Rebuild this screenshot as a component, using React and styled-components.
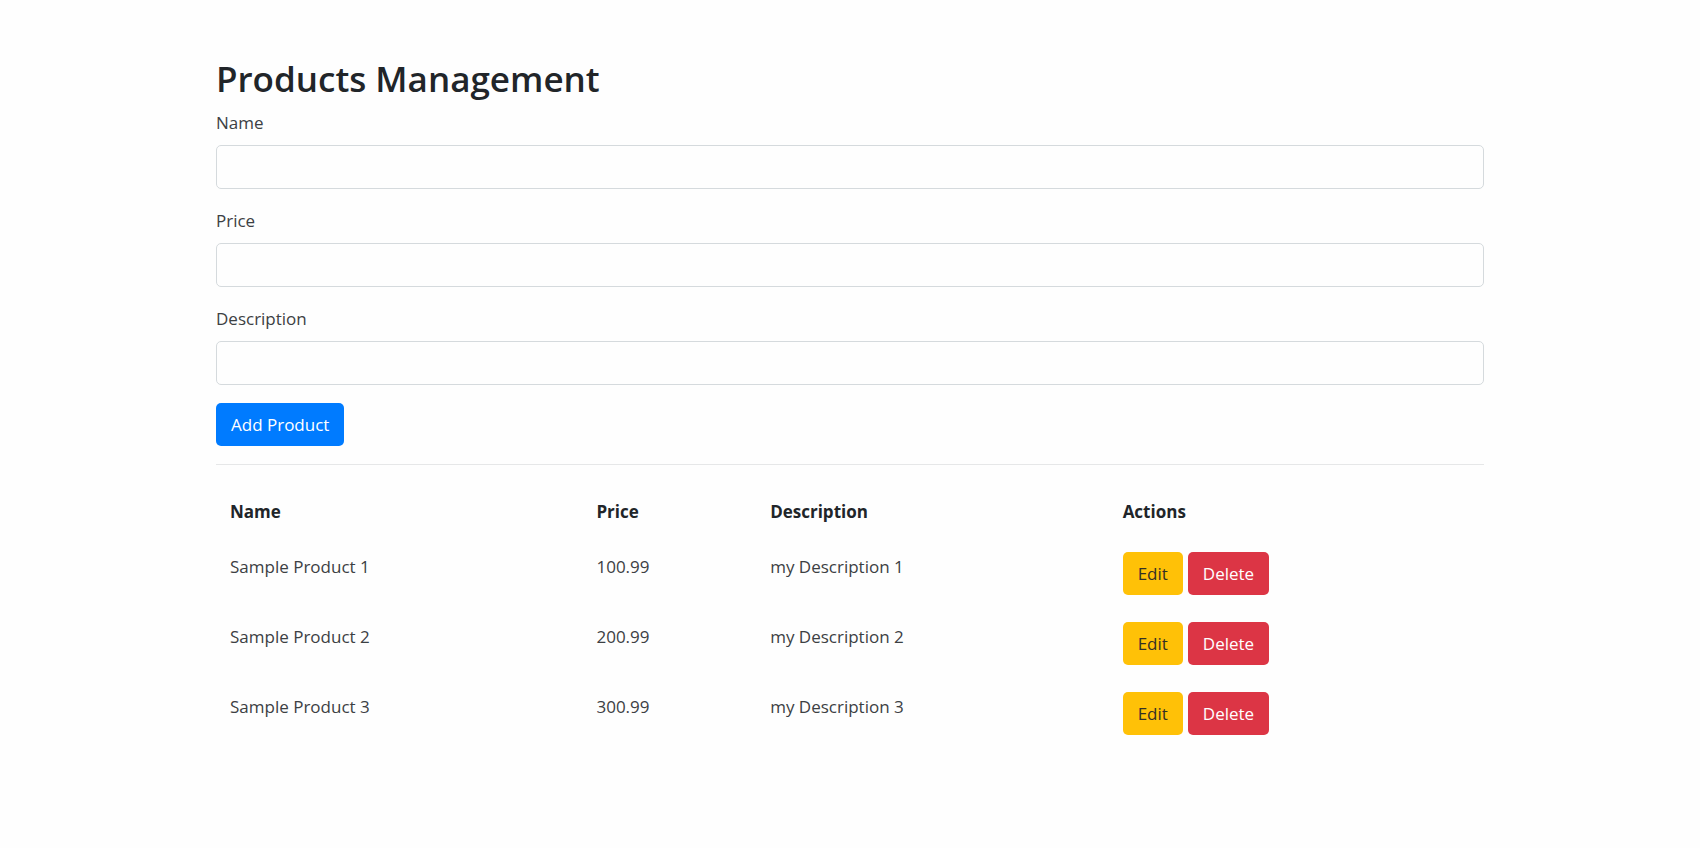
import React, { useState } from "react";
import styled, { createGlobalStyle } from "styled-components";

const GlobalStyle = createGlobalStyle`
  *, *::before, *::after { box-sizing: border-box; }
  body {
    margin: 0;
    background: #fefefe;
    color: #212529;
    font-family: "Segoe UI", "Open Sans", "Noto Sans", sans-serif;
    font-size: 17px;
    line-height: 27px;
  }
`;

const Container = styled.main`
  width: 100%;
  max-width: 1302px;
  margin: 0 auto;
  padding: 56px 17px;
`;

const Title = styled.h2`
  margin: 0 0 8px;
  font-size: 35px;
  font-weight: 600;
  line-height: 45px;
`;

const FormGroup = styled.div`
  margin-bottom: 18px;
`;

const Label = styled.label`
  display: block;
  margin-bottom: 9px;
  color: #3c4043;
`;

const Input = styled.input`
  display: block;
  width: 100%;
  height: 44px;
  padding: 7px 14px;
  border: 1px solid #d5dadd;
  border-radius: 5px;
  background: #fefefe;
  color: #495057;
  font: inherit;
`;

const variants = {
  primary: { background: "#007bff", color: "#fff" },
  warning: { background: "#ffc107", color: "#343026" },
  danger: { background: "#dc3545", color: "#fff" },
};

const Button = styled.button`
  display: block;
  height: 43px;
  padding: 0 15px;
  border: 0;
  border-radius: 5px;
  background: ${({ $variant }) => variants[$variant].background};
  color: ${({ $variant }) => variants[$variant].color};
  font: inherit;
  cursor: pointer;
`;

const Divider = styled.hr`
  margin: 18px 0 19px;
  border: 0;
  border-top: 1px solid #e6e7e8;
`;

const Table = styled.table`
  width: 100%;
  table-layout: fixed;
  border-collapse: collapse;
  text-align: left;
`;

const HeaderCell = styled.th`
  width: ${({ $width }) => $width};
  padding: 14px 14px 13px;
  font-weight: 700;
`;

const Cell = styled.td`
  padding: 14px 14px 13px;
  color: #3c4043;
  line-height: 29px;
  vertical-align: top;
`;

const Actions = styled.div`
  display: flex;
  gap: 5px;
`;

const fields = [
  { id: "name", label: "Name" },
  { id: "price", label: "Price" },
  { id: "description", label: "Description" },
];

const columns = [
  { label: "Name", width: "28.9%" },
  { label: "Price", width: "13.7%" },
  { label: "Description", width: "27.8%" },
  { label: "Actions", width: "29.6%" },
];

const initialProducts = [
  { id: 1, name: "Sample Product 1", price: "100.99", description: "my Description 1" },
  { id: 2, name: "Sample Product 2", price: "200.99", description: "my Description 2" },
  { id: 3, name: "Sample Product 3", price: "300.99", description: "my Description 3" },
];

const emptyForm = { name: "", price: "", description: "" };

export default function App() {
  const [products, setProducts] = useState(initialProducts);
  const [form, setForm] = useState(emptyForm);

  const addProduct = (event) => {
    event.preventDefault();
    setProducts([...products, { id: Date.now(), ...form }]);
    setForm(emptyForm);
  };

  const removeProduct = (id) => setProducts(products.filter((p) => p.id !== id));

  const editProduct = ({ id, ...values }) => {
    setForm(values);
    removeProduct(id);
  };

  return (
    <>
      <GlobalStyle />
      <Container>
        <Title>Products Management</Title>
        <form onSubmit={addProduct}>
          {fields.map(({ id, label }) => (
            <FormGroup key={id}>
              <Label htmlFor={id}>{label}</Label>
              <Input
                id={id}
                type="text"
                value={form[id]}
                onChange={(e) => setForm({ ...form, [id]: e.target.value })}
              />
            </FormGroup>
          ))}
          <Button type="submit" $variant="primary">Add Product</Button>
        </form>
        <Divider />
        <Table>
          <thead>
            <tr>
              {columns.map(({ label, width }) => (
                <HeaderCell key={label} scope="col" $width={width}>{label}</HeaderCell>
              ))}
            </tr>
          </thead>
          <tbody>
            {products.map((product) => (
              <tr key={product.id}>
                <Cell>{product.name}</Cell>
                <Cell>{product.price}</Cell>
                <Cell>{product.description}</Cell>
                <Cell>
                  <Actions>
                    <Button type="button" $variant="warning" onClick={() => editProduct(product)}>Edit</Button>
                    <Button type="button" $variant="danger" onClick={() => removeProduct(product.id)}>Delete</Button>
                  </Actions>
                </Cell>
              </tr>
            ))}
          </tbody>
        </Table>
      </Container>
    </>
  );
}
